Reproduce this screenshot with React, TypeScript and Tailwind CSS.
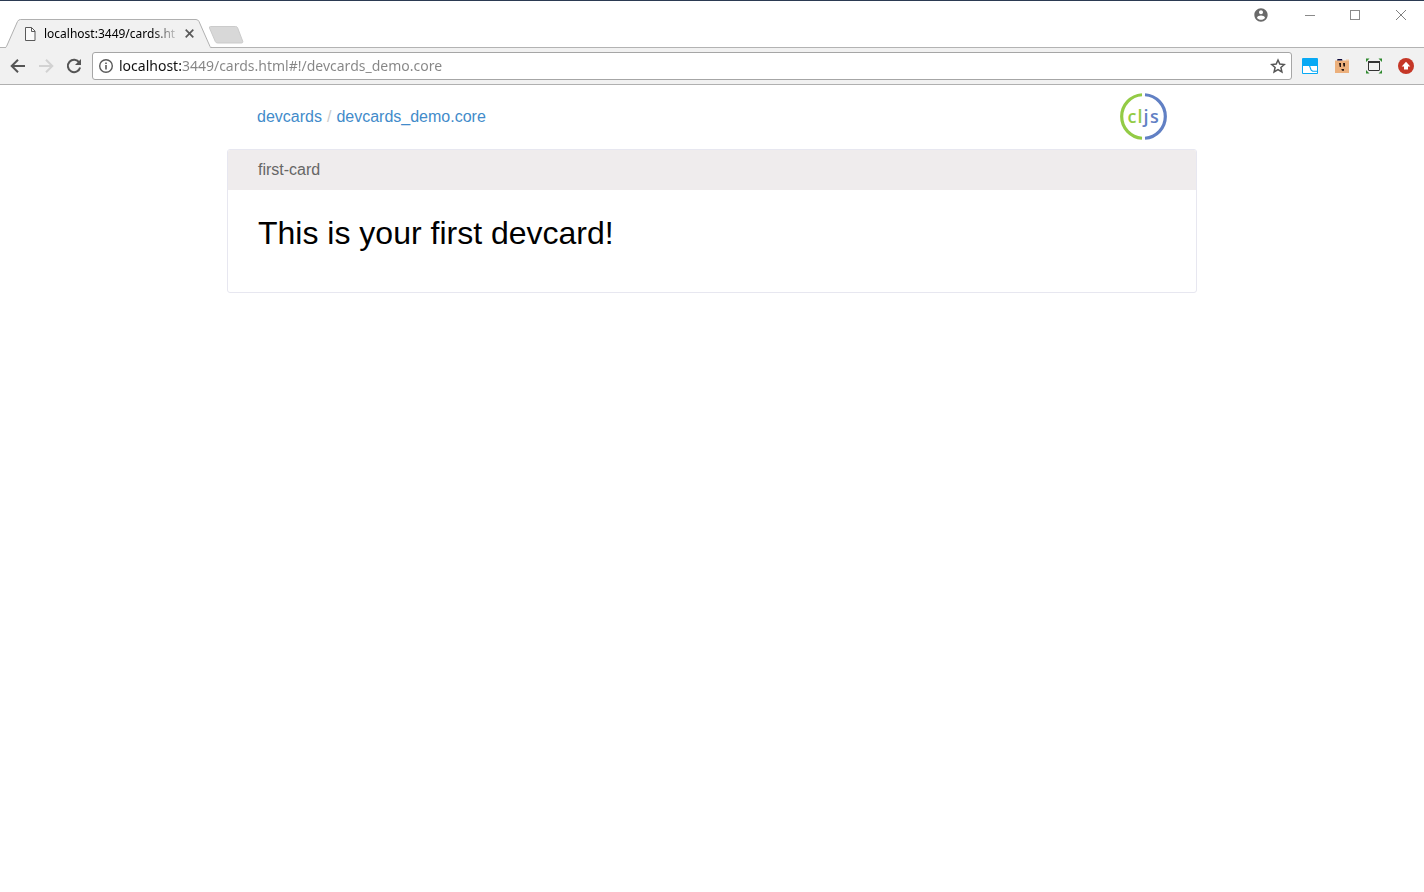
import React from "react";

function TabStrip() {
  return (
    <div className="flex h-12 items-end border-t border-[#2b3a52] bg-white shadow-[inset_0_-1px_0_#b3b3b3]">
      <div className="relative ml-[5px] h-[29px] w-[207px] shrink-0">
        <svg className="absolute inset-0" width="207" height="29" viewBox="0 0 207 29" aria-hidden="true">
          <path d="M0 29 L1 28.5 L12.5 2.5 Q13.500 .5 15.500 .5 H191 Q193 .5 194 2.500 L205 28.500 L207 29 Z" fill="#f1f1f1" />
          <path d="M0 28.5 Q1 28.500 1.500 27.500 L12.500 2.500 Q13.500 .5 15.500 .5 H191 Q193 .5 194 2.500 L205 27.500 Q205.500 28.500 207 28.500" fill="none" stroke="#b0b0b0" />
        </svg>
        <div className="relative flex h-full items-center pl-5">
          <svg width="11" height="14" viewBox="0 0 11 14" fill="none" stroke="#5a5a5a" aria-hidden="true">
            <path d="M.5 .5 H6.500 L10 4 V13.500 H.5 Z" fill="#fafafa" />
            <path d="M6.500 .5 V4.500 H10" />
          </svg>
          <span className="ml-2 whitespace-nowrap font-['Noto_Sans',sans-serif] text-[12px] leading-4 text-black [mask-image:linear-gradient(to_right,black_108px,transparent_136px)]">
            localhost:3449/cards.ht
          </span>
          <button type="button" aria-label="Close tab" className="absolute right-[15px] flex size-4 items-center justify-center">
            <svg width="9" height="9" viewBox="0 0 9 9" stroke="#5a5a5a" strokeWidth="1.7" aria-hidden="true">
              <path d="M.7 .7 L8.300 8.300 M8.300 .7 L.7 8.300" />
            </svg>
          </button>
        </div>
      </div>
      <button type="button" aria-label="New tab" className="-ml-1 mb-1 shrink-0">
        <svg className="block" width="36" height="18" viewBox="0 0 36 18" aria-hidden="true">
          <path d="M2.500 .5 H27.500 Q29 .5 29.500 1.500 L34.800 15.500 Q35 17 33.500 17 H9.500 Q8 17 7.300 15.500 L1.500 2 Q1 .5 2.500 .5 Z" fill="#d8d8d8" stroke="#cbcbcb" />
        </svg>
      </button>
      <div className="ml-auto flex h-7 items-center self-start">
        <button type="button" aria-label="Profile" className="flex w-[50px] items-center justify-center">
          <svg width="16" height="16" viewBox="0 0 24 24" fill="#6a6a6a" aria-hidden="true">
            <path d="M12 2C6.480 2 2 6.480 2 12s4.480 10 10 10 10-4.480 10-10S17.520 2 12 2zm0 3c1.660 0 3 1.340 3 3s-1.340 3-3 3-3-1.340-3-3 1.340-3 3-3zm0 14.200c-2.500 0-4.710-1.280-6-3.220.03-1.990 4-3.080 6-3.080 1.990 0 5.970 1.090 6 3.080-1.290 1.940-3.500 3.220-6 3.220z" />
          </svg>
        </button>
        <button type="button" aria-label="Minimize" className="flex w-12 items-center justify-center">
          <svg width="10" height="11" viewBox="0 0 10 11" stroke="#8a8a8a" aria-hidden="true">
            <path d="M0 5.500 H10" />
          </svg>
        </button>
        <button type="button" aria-label="Maximize" className="flex w-[42px] items-center justify-center">
          <svg width="10" height="10" viewBox="0 0 10 10" fill="none" stroke="#8a8a8a" aria-hidden="true">
            <rect x=".5" y=".5" width="9" height="9" />
          </svg>
        </button>
        <button type="button" aria-label="Close window" className="flex w-12 items-center justify-center">
          <svg width="12" height="12" viewBox="0 0 12 12" stroke="#808080" aria-hidden="true">
            <path d="M2 1 L12 11 M12 1 L2 11" />
          </svg>
        </button>
      </div>
    </div>
  );
}

function Toolbar() {
  return (
    <div className="flex h-[37px] items-center border-b border-[#b0b0b0] bg-[#f1f1f1] px-2">
      <button type="button" aria-label="Back" className="flex size-5 items-center justify-center">
        <svg width="20" height="20" viewBox="0 0 20 20" fill="none" stroke="#555" strokeWidth="2" aria-hidden="true">
          <path d="M17 10 H4.500 M10 3.700 L3.700 10 L10 16.300" />
        </svg>
      </button>
      <button type="button" aria-label="Forward" disabled className="ml-2 flex size-5 items-center justify-center">
        <svg width="20" height="20" viewBox="0 0 20 20" fill="none" stroke="#d2d2d2" strokeWidth="2" aria-hidden="true">
          <path d="M3 10 H15.500 M10 3.700 L16.300 10 L10 16.300" />
        </svg>
      </button>
      <button type="button" aria-label="Reload" className="ml-2 flex size-5 items-center justify-center">
        <svg width="20" height="20" viewBox="0 0 20 20" aria-hidden="true">
          <path d="M15.300 6.600 A6.200 6.200 0 1 0 16.100 11.500" fill="none" stroke="#555" strokeWidth="2" />
          <path d="M17 3 V9 H11 Z" fill="#555" />
        </svg>
      </button>
      <div className="ml-2 flex h-7 min-w-0 flex-1 items-center rounded-[3px] border border-[#a6a6a6] bg-white px-[5px]">
        <svg className="shrink-0" width="16" height="16" viewBox="0 0 16 16" aria-hidden="true">
          <circle cx="8" cy="8" r="6.300" fill="none" stroke="#5a5a5a" strokeWidth="1.400" />
          <path d="M7.200 7 H8.800 V11.500 H7.200 Z M7.200 4.400 H8.800 V6 H7.200 Z" fill="#5a5a5a" />
        </svg>
        <input
          type="text"
          aria-label="Address"
          defaultValue="localhost:3449/cards.html#!/devcards_demo.core"
          className="ml-[5px] h-6 min-w-0 flex-1 bg-[linear-gradient(to_right,#111_62px,#858585_62px)] bg-clip-text font-['Noto_Sans',sans-serif] text-[14px] leading-6 text-transparent caret-black outline-none"
        />
        <button type="button" aria-label="Bookmark this page" className="shrink-0">
          <svg className="block" width="16" height="16" viewBox="0 0 16 16" fill="none" stroke="#555" strokeWidth="1.500" aria-hidden="true">
            <path d="M8 2 L9.800 6.100 L14.300 6.500 L10.900 9.500 L11.900 13.900 L8 11.600 L4.100 13.900 L5.100 9.500 L1.700 6.500 L6.200 6.100 Z" />
          </svg>
        </button>
      </div>
      <div className="ml-[10px] flex items-center gap-4 pr-[2px]">
        <button type="button" aria-label="Window extension">
          <svg className="block" width="16" height="16" viewBox="0 0 16 16" aria-hidden="true">
            <rect width="16" height="16" rx="1" fill="#08a9f4" />
            <path d="M1 8 H7 L8.700 12.500 L10.500 13.700 H15 V15 H1 Z" fill="#fff" />
            <path d="M8.200 8 H15 V12.700 H11 L9.600 11.700 Z" fill="#fff" />
          </svg>
        </button>
        <button type="button" aria-label="Box extension">
          <svg className="block" width="16" height="16" viewBox="0 0 16 16" aria-hidden="true">
            <path d="M1 2.500 H15 V15 H1 Z" fill="#ecb07c" />
            <path d="M12 1.500 H15 V3 H12 Z" fill="#f3c79e" />
            <path d="M3.500 1 H8 L8.500 2.500 H3 Z" fill="#0e0b3d" />
            <path d="M5 5 H7 V9 H5.700 Z M9 5 H11 V8.500 H9.500 Z M7.300 11 H10 V12.700 H8 Z" fill="#25150f" />
          </svg>
        </button>
        <button type="button" aria-label="Fullscreen extension">
          <svg className="block" width="16" height="16" viewBox="0 0 16 16" aria-hidden="true">
            <path d="M0 .5 H3.500 L0 4 Z M16 .5 H12.500 L16 4 Z M0 15.500 H3.500 L0 12 Z M16 15.500 H12.500 L16 12 Z" fill="#2f8a2f" />
            <rect x="2.500" y="3.500" width="11" height="9" rx=".5" fill="#f1f1f1" stroke="#333" />
            <path d="M2 3 H14 V5 H2 Z" fill="#333" />
          </svg>
        </button>
        <button type="button" aria-label="Upload extension">
          <svg className="block" width="16" height="16" viewBox="0 0 16 16" aria-hidden="true">
            <circle cx="8" cy="8" r="8" fill="#c53727" />
            <path d="M8 3.800 L12.300 8.400 H10 V11.500 H6 V8.400 H3.700 Z" fill="#fff" />
          </svg>
        </button>
      </div>
    </div>
  );
}

function CljsLogo() {
  return (
    <svg width="48" height="48" viewBox="0 0 48 48" role="img" aria-label="cljs">
      <path d="M23 1.750 A21.800 21.800 0 0 0 23 45.250" fill="none" stroke="#93cb45" strokeWidth="3.200" />
      <path d="M26 1.750 A21.800 21.800 0 0 1 26 45.250" fill="none" stroke="#6180c4" strokeWidth="3.200" />
      <g fontSize="18" fontWeight="600" fontFamily="'Open Sans', sans-serif">
        <text x="8.500" y="29.500" fill="#93cb45">c</text>
        <text x="18.500" y="29.500" fill="#93cb45">l</text>
        <text x="24.500" y="29.500" fill="#6180c4">j</text>
        <text x="31" y="29.500" fill="#6180c4">s</text>
      </g>
    </svg>
  );
}

export default function App() {
  return (
    <div className="min-h-screen bg-white font-['Liberation_Sans',Arial,sans-serif]">
      <header>
        <TabStrip />
        <Toolbar />
      </header>
      <main className="mx-auto max-w-[970px]">
        <div className="flex h-16 items-center justify-between px-[30px]">
          <nav aria-label="Breadcrumb" className="flex gap-[5px] text-[16px] leading-6">
            <a href="#!/" className="text-[#428bca]">devcards</a>
            <span className="text-[#ccc]">/</span>
            <a href="#!/devcards_demo.core" className="text-[#428bca]">devcards_demo.core</a>
          </nav>
          <CljsLogo />
        </div>
        <section className="overflow-hidden rounded-[3px] border border-[#e7e7f0]">
          <h2 className="bg-[#efeced] px-[30px] py-2 text-[16px] leading-6 text-[#666]">first-card</h2>
          <div className="px-[30px] pb-10 pt-[25px]">
            <h1 className="text-[32px] leading-[37px] text-black">This is your first devcard!</h1>
          </div>
        </section>
      </main>
    </div>
  );
}
